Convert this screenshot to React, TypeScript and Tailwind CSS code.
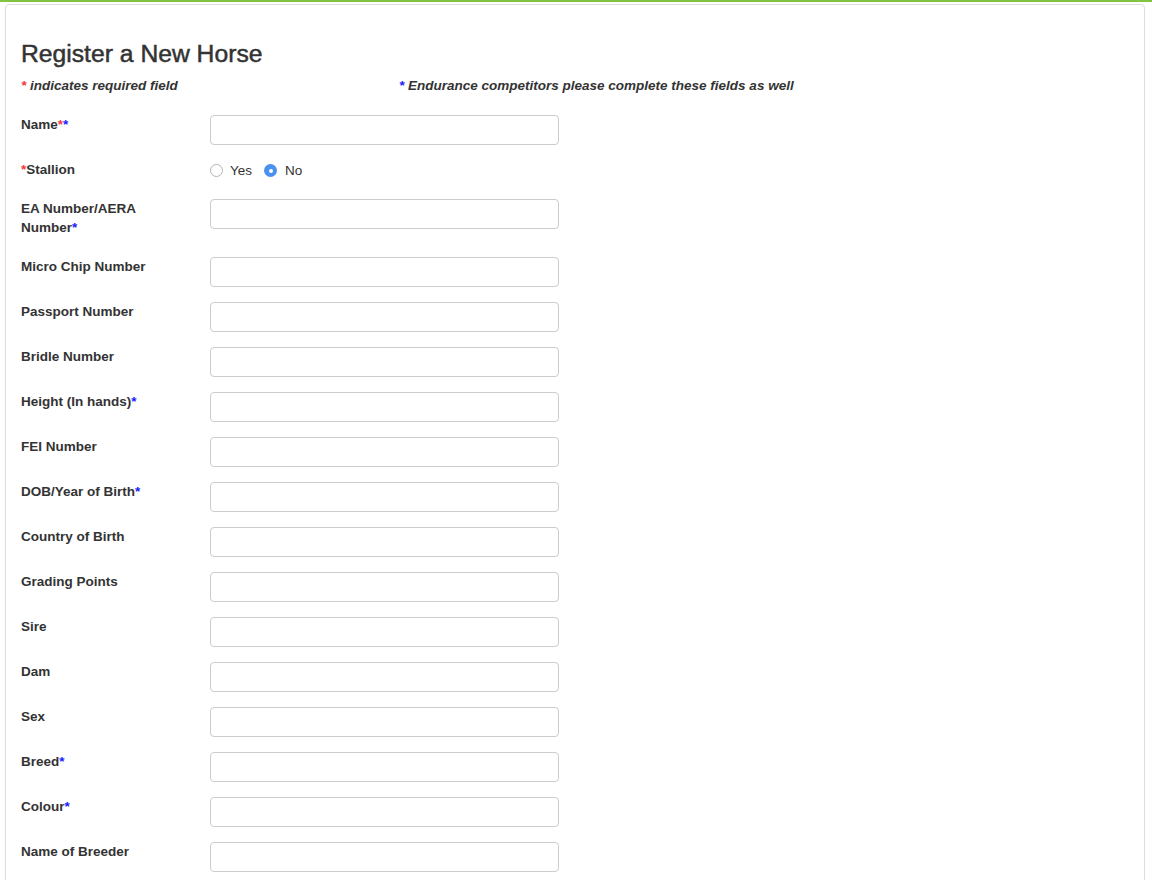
import React from "react";

type Field = {
  label: string;
  second?: string;
  blue?: boolean;
};

const fields: Field[] = [
  { label: "EA Number/AERA", second: "Number", blue: true },
  { label: "Micro Chip Number" },
  { label: "Passport Number" },
  { label: "Bridle Number" },
  { label: "Height (In hands)", blue: true },
  { label: "FEI Number" },
  { label: "DOB/Year of Birth", blue: true },
  { label: "Country of Birth" },
  { label: "Grading Points" },
  { label: "Sire" },
  { label: "Dam" },
  { label: "Sex" },
  { label: "Breed", blue: true },
  { label: "Colour", blue: true },
  { label: "Name of Breeder" },
];

function Red() {
  return <span className="text-[#f23a3a]">*</span>;
}

function Blue() {
  return <span className="text-[#1a1aff]">*</span>;
}

function TextInput() {
  return (
    <input
      type="text"
      className="h-[30px] w-[349px] rounded-[4px] border border-[#cccccc] bg-white px-2 text-[13px] outline-none"
    />
  );
}

function Row({ field }: { field: Field }) {
  return (
    <div className="mb-[15px] flex items-start">
      <label className="mb-[5px] w-[189px] shrink-0 font-bold leading-[19px]">
        {field.label}
        {field.second ? (
          <>
            <br />
            {field.second}
          </>
        ) : null}
        {field.blue && <Blue />}
      </label>
      <TextInput />
    </div>
  );
}

export default function App() {
  return (
    <div
      className="min-h-[880px] border-t-2 border-[#82c341] bg-white text-[13.5px] text-[#333333]"
      style={{ fontFamily: '"Liberation Sans", Arial, sans-serif' }}
    >
      <div className="ml-[5px] mr-[7px] mt-[2px] min-h-[900px] rounded-[4px] border border-[#dddddd] px-[15px] pt-[15px]">
        <h3 className="mt-[21px] mb-[9px] text-[24.7px] leading-[26.4px] [-webkit-text-stroke:0.5px_#333333]">
          Register a New Horse
        </h3>
        <div className="mb-[20px] flex font-bold italic leading-[19px]">
          <p className="w-[378px]">
            <Red /> indicates required field
          </p>
          <p>
            <Blue /> Endurance competitors please complete these fields as well
          </p>
        </div>

        <div className="mb-[15px] flex items-start">
          <label className="mb-[5px] w-[189px] shrink-0 font-bold leading-[19px]">
            Name
            <Red />
            <Blue />
          </label>
          <TextInput />
        </div>

        <div className="mb-[15px] flex items-start">
          <label className="mb-[5px] w-[189px] shrink-0 font-bold leading-[19px]">
            <Red />
            Stallion
          </label>
          <div className="flex items-center pt-[1px] leading-[19px]">
            <span className="inline-block h-[13px] w-[13px] rounded-full border border-[#b4b4b4] bg-white" />
            <span className="ml-[7px] mr-[12px]">Yes</span>
            <span className="flex h-[13px] w-[13px] items-center justify-center rounded-full bg-[#4a90f0]">
              <span className="h-[4px] w-[4px] rounded-full bg-white" />
            </span>
            <span className="ml-[8px]">No</span>
          </div>
        </div>

        {fields.map((f) => (
          <Row key={f.label} field={f} />
        ))}
      </div>
    </div>
  );
}
